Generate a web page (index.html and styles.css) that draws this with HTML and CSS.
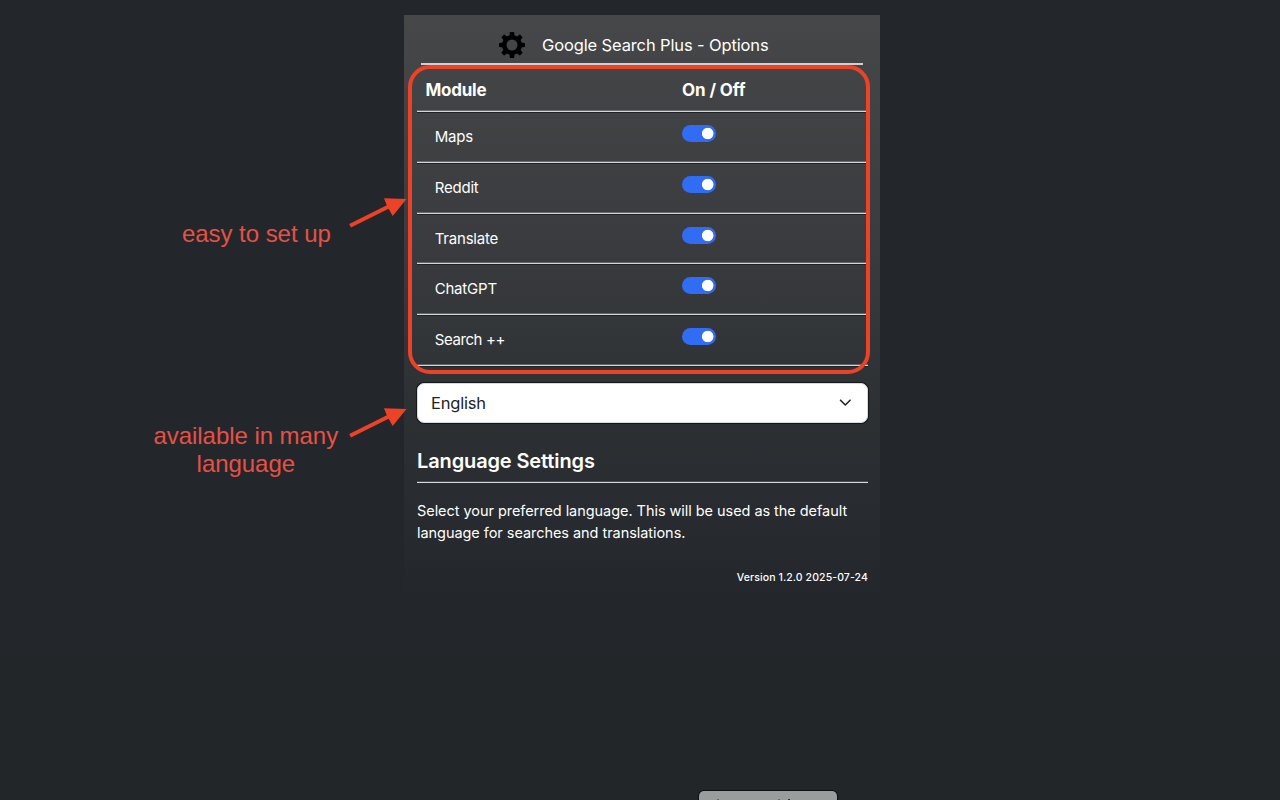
FILE: index.html
```html
<!DOCTYPE html>
<html lang="en">
<head>
<meta charset="utf-8">
<title>Google Search Plus - Options</title>
<link rel="stylesheet" href="styles.css">
</head>
<body>
<main class="panel">
  <header class="title-bar">
    <svg class="gear" viewBox="0 0 26 26" width="26" height="26"><g fill="#000"><path id="tooth" d="M10.4 4.5 10.9.5Q11 0 11.6 0h2.8q.6 0 .7.5l.5 4v17l-.5 4q-.1.5-.7.5h-2.8q-.6 0-.7-.5l-.5-4z"/><use href="#tooth" transform="rotate(45 13 13)"/><use href="#tooth" transform="rotate(90 13 13)"/><use href="#tooth" transform="rotate(135 13 13)"/><circle cx="13" cy="13" r="10"/></g><circle cx="13" cy="13" r="5.5" fill="#434547"/></svg>
    <h1 class="title">Google Search Plus - Options</h1>
  </header>
  <section class="modules">
    <div class="row head"><span>Module</span><span class="state">On / Off</span></div>
    <div class="row"><span class="name">Maps</span><span class="switch"></span></div>
    <div class="row"><span class="name">Reddit</span><span class="switch"></span></div>
    <div class="row"><span class="name">Translate</span><span class="switch"></span></div>
    <div class="row"><span class="name">ChatGPT</span><span class="switch"></span></div>
    <div class="row"><span class="name tight">Search ++</span><span class="switch"></span></div>
  </section>
  <div class="select"><span>English</span>
    <svg width="13" height="8" viewBox="0 0 13 8"><path d="M1.5 1.2 6.3 6l4.8-4.8" fill="none" stroke="#202428" stroke-width="1.6" stroke-linecap="round" stroke-linejoin="round"/></svg>
  </div>
  <h2 class="subtitle">Language Settings</h2>
  <p class="info">Select your preferred language. This will be used as the default<br>language for searches and translations.</p>
  <p class="version">Version 1.2.0 2025-07-24</p>
</main>
<div class="frame"></div>
<p class="note note-setup">easy to set up</p>
<p class="note note-language">available in many<br>language</p>
<svg class="arrow arrow-setup" width="58" height="34" viewBox="0 0 58 34"><path d="M.2 29 37.8 10.3 35 3.2 57.5 4 43.7 20.9 39.6 13.8 2 32.6z" fill="#ed4226"/></svg>
<svg class="arrow arrow-language" width="58" height="34" viewBox="0 0 58 34"><path d="M.2 29 37.8 10.3 35 3.2 57.5 4 43.7 20.9 39.6 13.8 2 32.6z" fill="#ed4226"/></svg>
<div class="bottom-button"><i></i><i></i><i></i></div>
</body>
</html>
```
FILE: styles.css
```css
* { box-sizing: border-box; }
body {
  margin: 0;
  height: 800px;
  overflow: hidden;
  position: relative;
  padding-top: 15px;
  background: linear-gradient(#23262b 0 655px, #222628 655px);
  color: #fff;
  font-family: Inter, "Liberation Sans", sans-serif;
}
.panel {
  width: 476px;
  height: 585px;
  margin-left: 404px;
  padding: 0 12px 0 13px;
  background: linear-gradient(#454749, #3a3c3f 37%, #2e3134 66%, #23262b);
}
.title-bar {
  display: flex;
  align-items: center;
  width: 442px;
  height: 50px;
  margin-left: 4px;
  padding: 11px 0 0 78px;
  gap: 17px;
  border-bottom: 2px solid #d3cfd3;
}
.gear { flex: none; }
.title { margin: 0; font-size: 16.5px; font-weight: 400; letter-spacing: -.13px; white-space: nowrap; }
.row {
  display: grid;
  grid-template-columns: 265px 1fr;
  height: 50.75px;
  border-bottom: 1px solid #d3d6d8;
  box-shadow: inset 0 -1px rgba(205, 210, 212, .3), 0 1px #202326;
  font-size: 15px;
  letter-spacing: -.2px;
}
.head {
  height: 47px;
  padding: 15px 0 0 8.5px;
  grid-template-columns: 256.5px 1fr;
  font-size: 17px;
  line-height: 20px;
  font-weight: 700;
  letter-spacing: -.25px;
}
.state { letter-spacing: -.1px; }
.name { padding: 15px 0 0 17.7px; line-height: 20px; }
.tight { letter-spacing: -.4px; }
.switch {
  width: 34px;
  height: 17px;
  margin-top: 13px;
  border-radius: 9px;
  background: radial-gradient(circle at 25.7px 50%, #fff 5.4px, #306cf4 6.1px);
}
.select {
  display: flex;
  align-items: center;
  justify-content: space-between;
  height: 40px;
  margin-top: 17px;
  padding: 1px 15px 0 13px;
  border: 1px solid #d5dade;
  border-radius: 7px;
  background: #fff;
  color: #202428;
  font-size: 16.5px;
  letter-spacing: -.2px;
  box-shadow: 0 0 0 1px #15181b;
}
.subtitle {
  height: 60px;
  margin: 0;
  padding-top: 25.5px;
  border-bottom: 1px solid #d8dadd;
  box-shadow: inset 0 -1px rgba(205, 210, 212, .2);
  font-size: 20px;
  line-height: 26px;
  font-weight: 600;
  letter-spacing: -.13px;
}
.info { margin: 17px 0 0; font-size: 14.5px; line-height: 22.5px; letter-spacing: -.05px; white-space: nowrap; }
.version { margin: 25px 0 0; text-align: right; font-size: 10.5px; line-height: 15px; font-weight: 500; letter-spacing: .1px; }
.frame {
  position: absolute;
  left: 408px;
  top: 65px;
  width: 462px;
  height: 309px;
  border: 4px solid #ed4226;
  border-radius: 22px;
}
.note {
  position: absolute;
  margin: 0;
  color: #e65145;
  font: 24px/28px "Liberation Sans", sans-serif;
  letter-spacing: -.05px;
  text-align: center;
  white-space: nowrap;
}
.note-setup { left: 182px; top: 220px; }
.note-language { left: 153.5px; top: 422px; }
.arrow { position: absolute; left: 349px; }
.arrow-setup { top: 195px; }
.arrow-language { top: 405px; }
.bottom-button {
  position: absolute;
  left: 699px;
  top: 791px;
  width: 138px;
  height: 9px;
  border-radius: 5px 5px 0 0;
  background: #999d9e;
  box-shadow: 0 0 0 1px #0c0e10;
  overflow: hidden;
}
.bottom-button i { position: absolute; top: 8px; width: 2px; height: 1px; background: #62676a; }
.bottom-button i:nth-child(1) { left: 18px; }
.bottom-button i:nth-child(2) { left: 79px; }
.bottom-button i:nth-child(3) { left: 89px; background: #303437; }
```
